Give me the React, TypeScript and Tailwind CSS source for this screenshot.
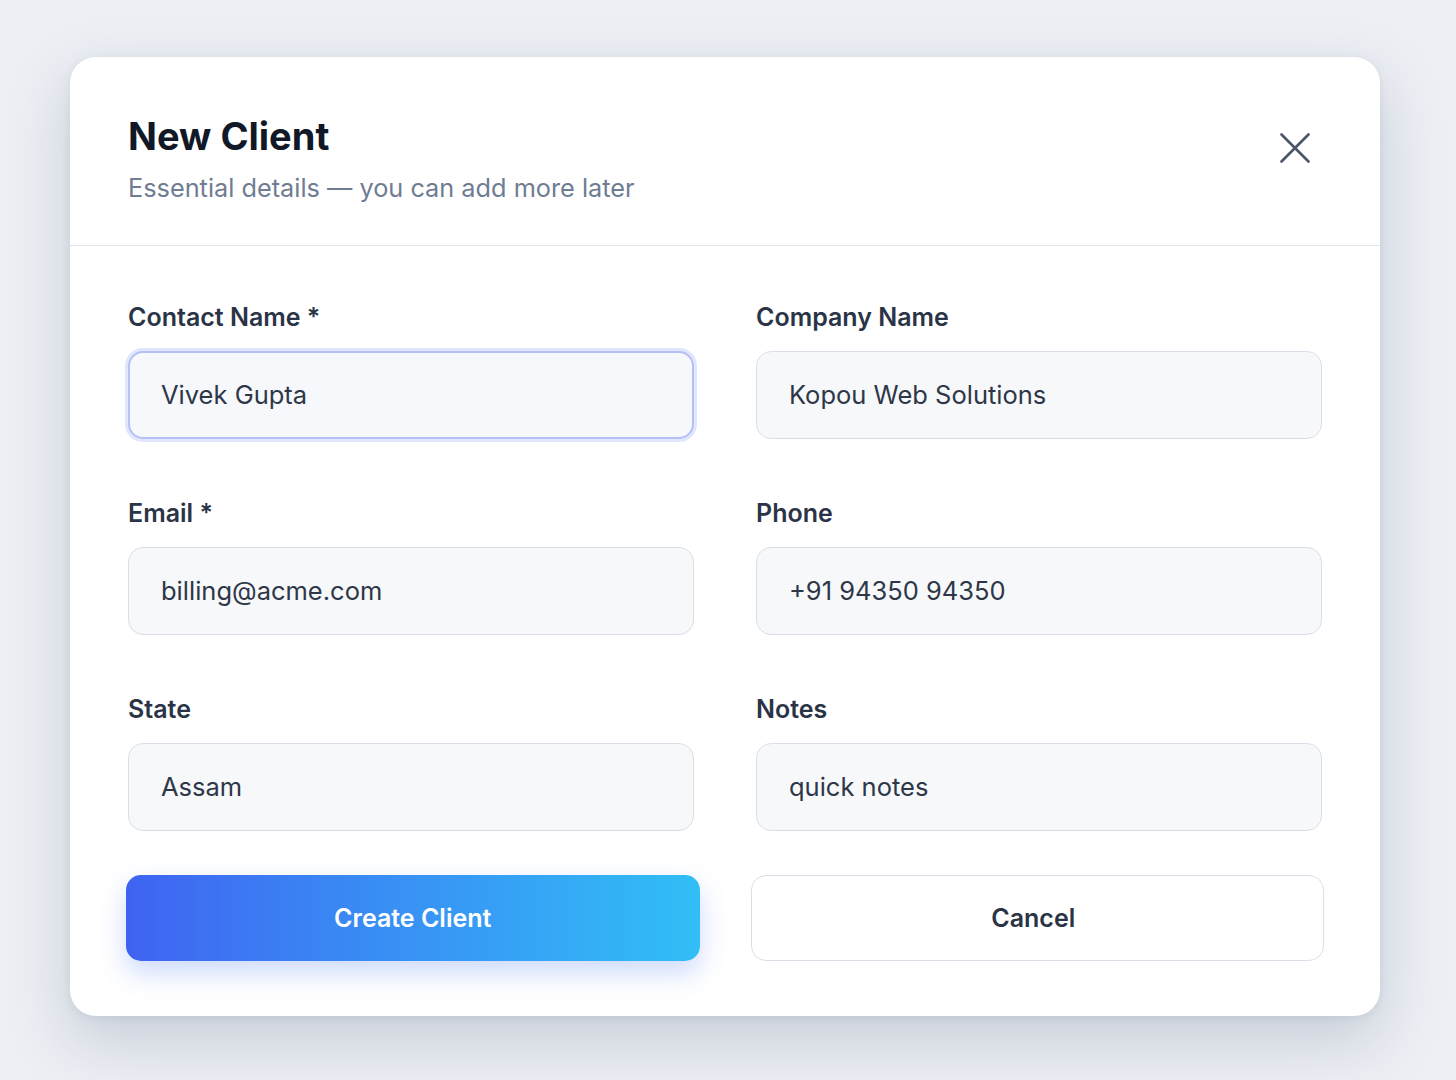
import React from "react";

const font = { fontFamily: "Inter, 'Open Sans', 'Liberation Sans', sans-serif" };

function Field({ label, value, focused }: { label: string; value: string; focused?: boolean }) {
  return (
    <div className="flex flex-col">
      <label className="text-[25px] leading-none font-semibold text-[#2a3446] mb-[21px]">{label}</label>
      <div
        className={
          focused
            ? "h-[88px] rounded-[15px] bg-[#f7f8fb] border-2 border-[#b4c0f6] shadow-[0_0_0_3px_rgba(195,205,250,0.5)] flex items-center pl-[31px]"
            : "h-[88px] rounded-[15px] bg-[#f7f8fa] border border-[#dadee8] flex items-center pl-[32px]"
        }
      >
        <span className="text-[25.5px] text-[#2d3748]">{value}</span>
      </div>
    </div>
  );
}

export default function App() {
  return (
    <div className="min-h-screen w-full bg-[#eceff4] pt-[57px] pb-[64px]" style={font}>
      <div className="ml-[70px] w-[1310px] h-[959px] rounded-[26px] bg-white shadow-[0_24px_60px_rgba(100,116,139,0.28),0_2px_8px_rgba(100,116,139,0.12)] flex flex-col">
        <div className="flex justify-between items-start pl-[58px] pr-[70px] pt-[60px] pb-[45px] border-b border-[#dfe3ea]">
          <div className="flex flex-col">
            <h1 className="text-[38px] leading-none font-bold text-[#111827]">New Client</h1>
            <p className="mt-[20px] text-[25.3px] leading-none text-[#6f7c92]">Essential details — you can add more later</p>
          </div>
          <svg width="30" height="30" viewBox="0 0 30 30" className="mt-[16px]" fill="none">
            <path d="M1.5 1.5 L28.5 28.5 M28.5 1.5 L1.5 28.5" stroke="#4a5568" strokeWidth="2.6" strokeLinecap="round" />
          </svg>
        </div>
        <div className="px-[58px] pt-[59px] flex flex-col">
          <div className="grid grid-cols-2 gap-x-[62px] gap-y-[62px]">
            <Field label="Contact Name *" value="Vivek Gupta" focused />
            <Field label="Company Name" value="Kopou Web Solutions" />
            <Field label="Email *" value="billing@acme.com" />
            <Field label="Phone" value="+91 94350 94350" />
            <Field label="State" value="Assam" />
            <Field label="Notes" value="quick notes" />
          </div>
          <div className="grid grid-cols-2 gap-x-[51px] mt-[44px] -mx-[2px]">
            <button className="h-[86px] rounded-[15px] bg-gradient-to-r from-[#3f63f1] to-[#31bef6] text-white text-[25px] font-semibold shadow-[0_12px_26px_rgba(59,110,246,0.25)]">
              Create Client
            </button>
            <button className="h-[86px] rounded-[15px] bg-white border border-[#dadee8] text-[#2a3446] text-[25px] font-semibold pr-[8px]">
              Cancel
            </button>
          </div>
        </div>
      </div>
    </div>
  );
}
